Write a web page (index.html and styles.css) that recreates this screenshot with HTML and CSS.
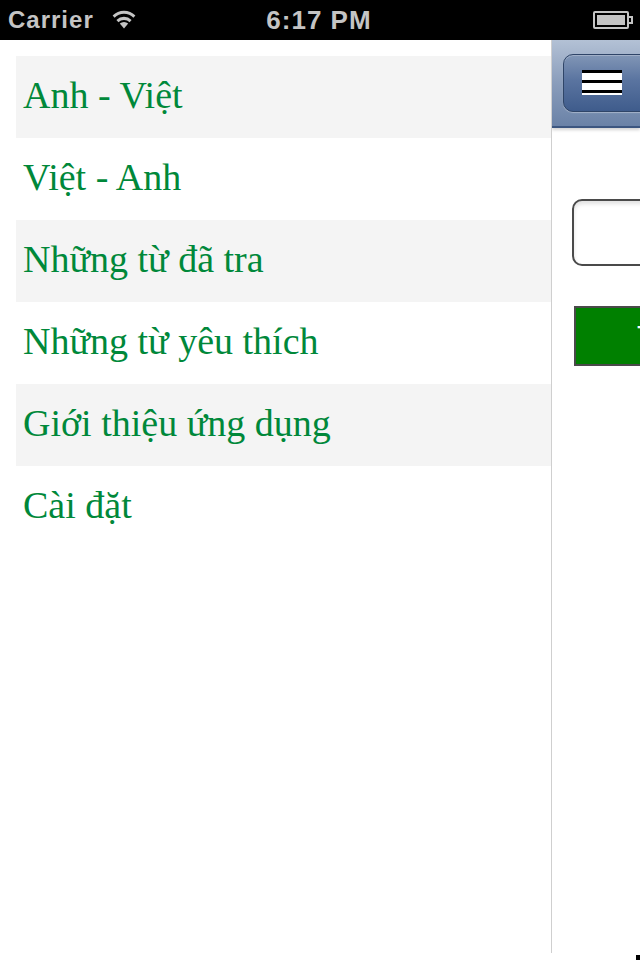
FILE: index.html
```html
<!DOCTYPE html>
<html lang="vi">
<head>
<meta charset="utf-8">
<title>Từ điển</title>
<link rel="stylesheet" href="styles.css">
</head>
<body>
<div class="status-bar">
  <div class="status-left">
    <span class="carrier">Carrier</span>
    <svg class="wifi" width="26" height="20" viewBox="0 0 26 20">
      <path d="M13 19.5 L8.8 14.6 A6.2 6.2 0 0 1 17.2 14.6 Z" fill="#c4c4c4"/>
      <path d="M5.4 10.9 A11 11 0 0 1 20.6 10.9 L18.6 13.2 A8 8 0 0 0 7.4 13.2 Z" fill="#c4c4c4"/>
      <path d="M1.6 6.5 A16.2 16.2 0 0 1 24.4 6.5 L22.4 8.8 A13.2 13.2 0 0 0 3.6 8.8 Z" fill="#c4c4c4"/>
    </svg>
  </div>
  <div class="status-time">6:17 PM</div>
  <div class="status-right">
    <div class="battery"><div class="battery-fill"></div></div>
    <div class="battery-tip"></div>
  </div>
</div>
<div class="main">
  <nav class="drawer">
    <ul class="menu">
      <li class="menu-item alt">Anh - Việt</li>
      <li class="menu-item">Việt - Anh</li>
      <li class="menu-item alt">Những từ đã tra</li>
      <li class="menu-item">Những từ yêu thích</li>
      <li class="menu-item alt">Giới thiệu ứng dụng</li>
      <li class="menu-item">Cài đặt</li>
    </ul>
  </nav>
  <section class="panel">
    <header class="navbar">
      <div class="menu-btn">
        <div class="burger"><span></span><span></span><span></span></div>
      </div>
    </header>
    <div class="panel-body">
      <div class="search-input"></div>
      <div class="search-btn">Tra cứu</div>
    </div>
  </section>
</div>
<div class="corner"></div>
</body>
</html>
```
FILE: styles.css
```css
* { box-sizing: border-box; }
html, body { margin: 0; padding: 0; }
body {
  width: 640px;
  height: 960px;
  overflow: hidden;
  background: #fff;
  position: relative;
  font-family: "Liberation Sans", Arial, sans-serif;
}
.status-bar {
  height: 40px;
  background: #000;
  color: #c4c4c4;
  font-weight: bold;
  font-size: 24px;
  letter-spacing: 1px;
  display: flex;
  align-items: center;
  justify-content: space-between;
  padding: 0 7px 0 8px;
  position: relative;
}
.status-left { display: flex; align-items: center; gap: 17px; width: 200px; }
.wifi { margin-top: -2px; }
.status-time {
  position: absolute;
  left: 0; right: 0;
  text-align: center;
  font-size: 26px;
  pointer-events: none;
  padding-right: 2px;
}
.status-right { display: flex; align-items: center; }
.battery {
  width: 36px; height: 18px;
  border: 2px solid #c4c4c4;
  border-radius: 2px;
  padding: 2px;
}
.battery-fill { width: 100%; height: 100%; background: #c4c4c4; }
.battery-tip { width: 4px; height: 8px; border: 2px solid #c4c4c4; border-left: 0; }
.main {
  display: flex;
  height: 920px;
}
.drawer {
  width: 552px;
  flex: none;
  height: 913px;
  border-right: 1px solid #cfcfcf;
  padding: 16px 0 0 16px;
}
.menu { list-style: none; margin: 0; padding: 0; }
.menu-item {
  height: 82px;
  line-height: 78px;
  padding-left: 7px;
  font-family: "Liberation Serif", "Times New Roman", serif;
  font-size: 38px;
  color: #00883a;
  white-space: nowrap;
}
.menu-item.alt { background: #f4f4f4; }
.panel {
  flex: 1;
  overflow: hidden;
  min-width: 0;
}
.navbar {
  height: 88px;
  background: linear-gradient(#b3c1d5, #8a9dbb 50%, #6a82a7);
  border-bottom: 2px solid #3c5680;
  box-shadow: 0 2px 3px rgba(0,0,0,0.18);
  padding: 14px 0 0 11px;
  position: relative;
}
.menu-btn {
  width: 90px;
  height: 58px;
  border: 1.5px solid #2f4568;
  border-radius: 10px;
  background: linear-gradient(#8196b6, #5a74a0 45%, #3f5c8c);
  box-shadow: 0 1px 1px rgba(255,255,255,0.35), inset 0 1px 0 rgba(255,255,255,0.25);
  padding: 15px 0 0 18px;
}
.burger {
  width: 40px;
  height: 25px;
  background: #fff;
  display: flex;
  flex-direction: column;
  gap: 7px;
}
.burger span { display: block; height: 3px; background: #000; }
.panel-body {
  padding: 71px 0 0 20px;
}
.search-input {
  width: 120px;
  height: 67px;
  border: 2px solid #4a4a4a;
  border-radius: 10px;
  background: #fff;
  box-shadow: inset 0 3px 4px rgba(0,0,0,0.12);
}
.search-btn {
  margin: 40px 0 0 2px;
  width: 140px;
  height: 60px;
  border: 2px solid #4a4a4a;
  background: #008000;
  color: #fff;
  font-size: 30px;
  line-height: 56px;
  padding-left: 61px;
  white-space: nowrap;
}
.corner {
  position: absolute;
  right: 0; bottom: 0;
  width: 4px; height: 5px;
  background: #000;
}
```
